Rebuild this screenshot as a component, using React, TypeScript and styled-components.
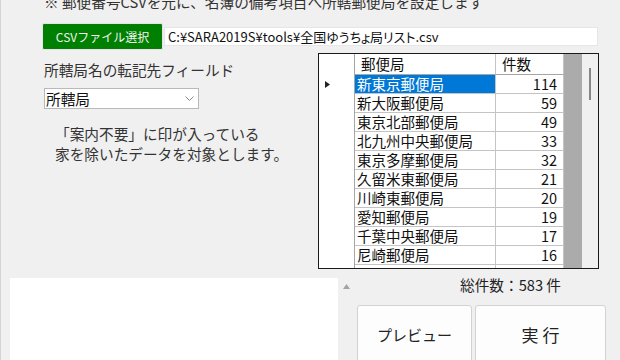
import React from 'react';
import styled, { createGlobalStyle } from 'styled-components';

const GlobalStyle = createGlobalStyle`
  html, body {
    margin: 0;
    padding: 0;
    background: #f0f0f0;
  }
  body {
    font-family: "Noto Sans CJK JP", "Noto Sans", sans-serif;
    color: #2b2b2b;
  }
`;

const Window = styled.div`
  width: 620px;
  height: 360px;
  overflow: hidden;
  box-sizing: border-box;
  border-left: 1px solid #d4d4d4;
  background: #f0f0f0;
  display: flex;
  flex-direction: column;
`;

const Notice = styled.div`
  margin: -7px 0 0 43px;
  font-size: 14.67px;
  line-height: 18px;
  white-space: nowrap;
  color: #333;
`;

const FileRow = styled.div`
  display: flex;
  align-items: center;
  margin-top: 12px;
  padding-left: 41px;
  height: 27px;
`;

const GreenButton = styled.button`
  width: 121px;
  height: 27px;
  box-sizing: border-box;
  border: 1px solid #e4e4e4;
  border-radius: 2px;
  background: #008000;
  color: #f2f2f2;
  font-family: inherit;
  font-size: 12px;
  padding: 0;
  box-shadow: inset 0 0 0 1px #0a7a0a;
`;

const PathField = styled.div`
  width: 434px;
  height: 19px;
  box-sizing: border-box;
  margin-left: 1px;
  background: #fff;
  border: 1px solid #e6e6e6;
  padding-left: 3px;
  font-size: 13px;
  line-height: 17px;
  white-space: nowrap;
  font-feature-settings: "palt";
  color: #111;
`;

const Main = styled.div`
  display: flex;
  margin-top: 3px;
`;

const LeftPanel = styled.div`
  width: 317px;
  box-sizing: border-box;
  padding-left: 43px;
  display: flex;
  flex-direction: column;
`;

const FieldLabel = styled.div`
  margin-top: 8px;
  font-size: 14.67px;
  line-height: 18px;
  color: #333;
`;

const Select = styled.div`
  margin-top: 9px;
  width: 155px;
  height: 21px;
  box-sizing: border-box;
  background: #fff;
  border: 1px solid #b9b9b9;
  display: flex;
  align-items: center;
  justify-content: space-between;
  padding: 0 4px 0 1px;
  font-size: 14.67px;
  color: #111;
`;

const Note = styled.div`
  margin-top: 15px;
  padding-left: 11px;
  font-size: 14.67px;
  line-height: 20px;
  color: #333;
`;

const GridBox = styled.div`
  width: 281px;
  height: 216px;
  box-sizing: border-box;
  border: 1px solid #1a1a1a;
  display: flex;
`;

const GridBody = styled.div`
  flex: 1;
  background: #ababab;
  overflow: hidden;
`;

const GridRow = styled.div<{ $head?: boolean }>`
  display: grid;
  grid-template-columns: 36px 141px 68px;
  width: 245px;
  height: ${(p) => (p.$head ? '21px' : '19px')};
`;

const RowHead = styled.div`
  background: #fff;
  border-right: 1px solid #a6a6a6;
  display: flex;
  align-items: center;
  padding-left: 6px;
`;

const Cell = styled.div<{ $num?: boolean; $sel?: boolean; $head?: boolean }>`
  background: ${(p) => (p.$sel ? '#0078d7' : '#fff')};
  color: ${(p) => (p.$sel ? '#fff' : '#111')};
  border-right: 1px solid #c4c4c4;
  border-bottom: 1px solid ${(p) => (p.$head ? '#a6a6a6' : '#c4c4c4')};
  font-size: 14.5px;
  line-height: 18px;
  white-space: nowrap;
  text-align: ${(p) => (p.$num ? 'right' : 'left')};
  padding: ${(p) => (p.$head ? '1px 0 0 6px' : p.$num ? '0 6px 0 0' : '0 0 0 2px')};
  box-sizing: border-box;
`;

const VScroll = styled.div`
  width: 16px;
  background: #f0f0f0;
  display: flex;
  justify-content: center;
  padding-top: 14px;
`;

const Thumb = styled.div`
  width: 2px;
  height: 32px;
  background: #868686;
`;

const Bottom = styled.div`
  display: flex;
  margin-top: 9px;
  padding-left: 9px;
`;

const LogBox = styled.div`
  width: 344px;
  height: 90px;
  background: #fff;
  display: flex;
  justify-content: flex-end;
`;

const LogScroll = styled.div`
  width: 16px;
  background: #f0f0f0;
  display: flex;
  justify-content: center;
  padding-top: 6px;
  box-sizing: border-box;
`;

const Side = styled.div`
  margin-left: 3px;
  width: 250px;
  display: flex;
  flex-direction: column;
`;

const Total = styled.div`
  padding-left: 103px;
  font-size: 14.67px;
  line-height: 18px;
  margin-top: -2px;
  color: #222;
`;

const ButtonRow = styled.div`
  display: flex;
  gap: 3px;
  margin-top: 11px;
`;

const BigButton = styled.button<{ $w: number; $size: number }>`
  width: ${(p) => p.$w}px;
  height: 70px;
  box-sizing: border-box;
  background: #fdfdfd;
  border: 1px solid #d2d2d2;
  border-radius: 3px;
  font-family: inherit;
  font-size: ${(p) => p.$size}px;
  color: #222;
  padding: 0 0 12px;
`;

const rows: [string, number][] = [
  ['新東京郵便局', 114],
  ['新大阪郵便局', 59],
  ['東京北部郵便局', 49],
  ['北九州中央郵便局', 33],
  ['東京多摩郵便局', 32],
  ['久留米東郵便局', 21],
  ['川崎東郵便局', 20],
  ['愛知郵便局', 19],
  ['千葉中央郵便局', 17],
  ['尼崎郵便局', 16],
  ['', 0],
];

const App = (): JSX.Element => {
  return (
    <Window>
      <GlobalStyle />
      <Notice>※ 郵便番号CSVを元に、名簿の備考項目へ所轄郵便局を設定します</Notice>
      <FileRow>
        <GreenButton>CSVファイル選択</GreenButton>
        <PathField>C:¥SARA2019S¥tools¥全国ゆうちょ局リスト.csv</PathField>
      </FileRow>
      <Main>
        <LeftPanel>
          <FieldLabel>所轄局名の転記先フィールド</FieldLabel>
          <Select>
            <span>所轄局</span>
            <svg width="9" height="5" viewBox="0 0 9 5">
              <polyline points="0.5,0.5 4.5,4.5 8.5,0.5" fill="none" stroke="#8a8a8a" strokeWidth="1" />
            </svg>
          </Select>
          <Note>
            「案内不要」に印が入っている
            <br />
            家を除いたデータを対象とします。
          </Note>
        </LeftPanel>
        <GridBox>
          <GridBody>
            <GridRow $head>
              <RowHead />
              <Cell $head>郵便局</Cell>
              <Cell $head>件数</Cell>
            </GridRow>
            {rows.map(([name, count], i) => (
              <GridRow key={i}>
                <RowHead>
                  {i === 0 && (
                    <svg width="5" height="7" viewBox="0 0 5 7">
                      <polygon points="0,0 5,3.5 0,7" fill="#222" />
                    </svg>
                  )}
                </RowHead>
                <Cell $sel={i === 0}>{name}</Cell>
                <Cell $num>{count || ''}</Cell>
              </GridRow>
            ))}
          </GridBody>
          <VScroll>
            <Thumb />
          </VScroll>
        </GridBox>
      </Main>
      <Bottom>
        <LogBox>
          <LogScroll>
            <svg width="7" height="5" viewBox="0 0 7 5">
              <polygon points="0,5 3.5,0 7,5" fill="#a3a3a3" />
            </svg>
          </LogScroll>
        </LogBox>
        <Side>
          <Total>総件数：583 件</Total>
          <ButtonRow>
            <BigButton $w={115} $size={15}>プレビュー</BigButton>
            <BigButton $w={131} $size={17}>実 行</BigButton>
          </ButtonRow>
        </Side>
      </Bottom>
    </Window>
  );
};

export default App;
